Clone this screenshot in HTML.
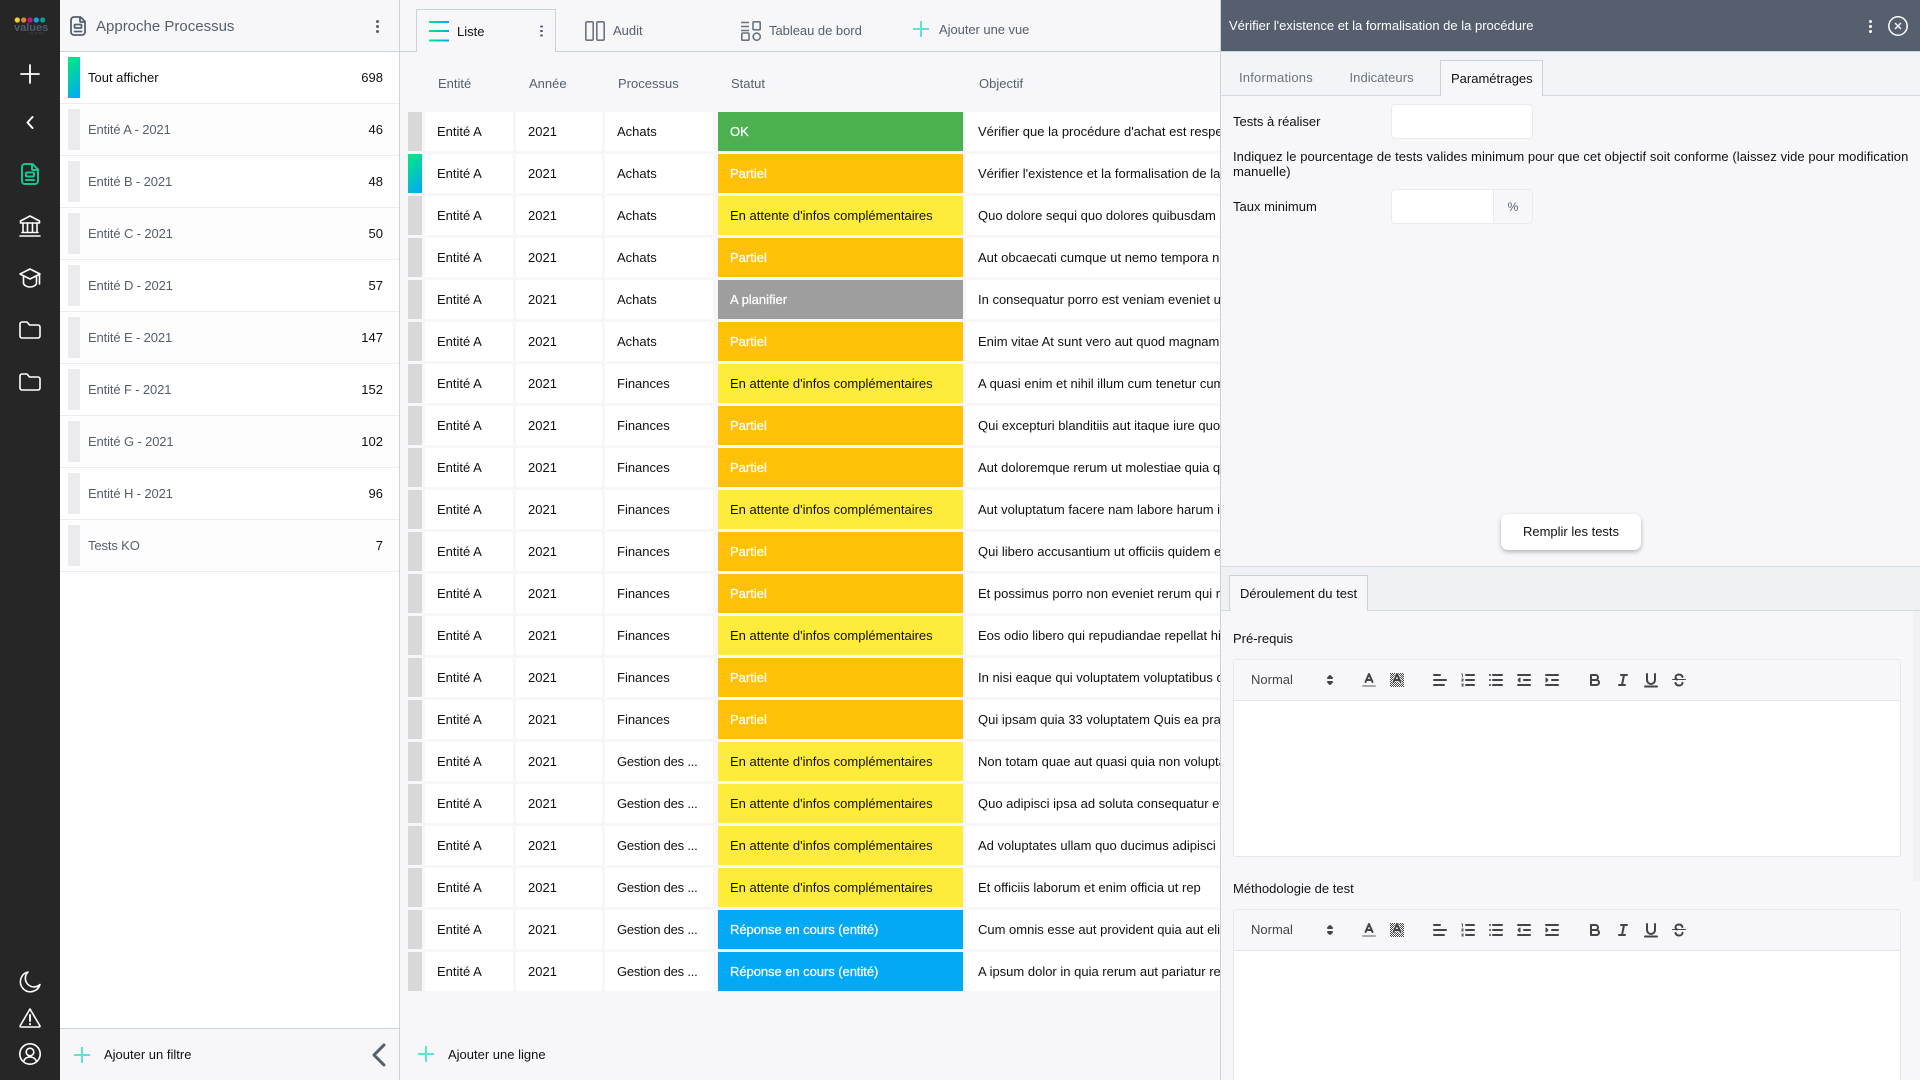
<!DOCTYPE html>
<html lang="fr"><head><meta charset="utf-8"><title>Approche Processus</title>
<style>
*{box-sizing:border-box}
html,body{margin:0;padding:0;width:1920px;height:1080px;overflow:hidden;background:#f7f7fa;font:13px/20px "Liberation Sans",sans-serif;color:#111}
#root{position:absolute;left:0;top:0;width:1920px;height:1080px;overflow:hidden;background:#f7f7fa}
.a,.t{position:absolute}
.t{white-space:nowrap;line-height:20px}
svg{position:absolute;overflow:visible;fill:none}
#side{left:0;top:0;width:60px;height:1080px;background:#262626}
#side svg{stroke:#fff;stroke-width:1.6;stroke-linecap:round;stroke-linejoin:round}
#left{left:60px;top:0;width:340px;height:1080px;background:#fff;border-right:1px solid #c9d3dc}
.f{position:absolute;left:60px;width:339px;height:52px;border-bottom:1px solid #e9ecf0;background:#fff}
.f.o{background:#fdfdfe}
.f i{position:absolute;left:8px;top:5px;width:12px;height:41px;background:#eaeaef}
.f span{position:absolute;left:28px;top:0;line-height:52px;color:#555f6d;letter-spacing:-.13px;white-space:nowrap}
.f b{position:absolute;right:16px;top:0;line-height:52px;font-weight:400;color:#111}
.grad{background:linear-gradient(135deg,#00e882 5%,#03a9f4 95%)!important}
.plus{position:absolute;width:16px;height:16px}
.plus:before,.plus:after{content:"";position:absolute}
.plus:before{left:0;top:7px;width:16px;height:1.6px;background:linear-gradient(90deg,#55f0ab,#5fd8ff)}
.plus:after{left:7px;top:0;width:1.6px;height:16px;background:linear-gradient(180deg,#55f0ab,#5fd8ff)}
.dots{position:absolute;width:3px;height:3px;border-radius:50%;background:#555f6d;box-shadow:0 -5px 0 #555f6d,0 5px 0 #555f6d}
.h{color:#555f6d;top:74px}
.r{position:absolute;left:408px;width:812px;height:39px;line-height:39px;overflow:hidden}
.r>*{position:absolute;top:0;height:39px;white-space:nowrap;overflow:hidden;font-style:normal;font-weight:400;text-decoration:none;background:#fff;color:#111}
.r>i{left:0;width:14px;background:#d8d8d8}
.r>b:nth-child(2){left:17px;width:88px;padding-left:12px}
.r>b:nth-child(3){left:108px;width:86px;padding-left:12px}
.r>b:nth-child(4){left:197px;width:108px;padding-left:12px}
.r>b.g{letter-spacing:-.22px}
.r>u{left:310px;width:245px;padding-left:12px}
.r>b:nth-child(6){left:558px;width:254px;padding-left:12px}
.ok{background:#4caf50!important;color:#fff!important;-webkit-text-stroke:.25px #fff}
.pa{background:#ffc107!important;color:#fff!important;-webkit-text-stroke:.25px #fff}
.at{background:#ffeb3b!important;color:#111!important}
.pl{background:#9e9e9e!important;color:#fff!important;-webkit-text-stroke:.25px #fff}
.re{background:#03a9f4!important;color:#fff!important;-webkit-text-stroke:.25px #fff;letter-spacing:-.05px}
#panel{left:1220px;top:0;width:700px;height:1080px;background:#f7f7fa;border-left:1px solid #c9d3dc}
.box{position:absolute;background:#fff;border:1px solid #eaebef;border-radius:4px}
.ed{position:absolute;left:1233px;width:668px;background:#fff;border:1px solid #e6e7ea;border-radius:3px}
.ed .tb{position:absolute;left:0;top:0;width:666px;height:41px;background:#f7f7fa;border-bottom:1px solid #e2e3e6}
.tb svg{stroke:#444;stroke-width:2;stroke-linecap:round;stroke-linejoin:round}
.tb .n{position:absolute;left:17px;top:10px;color:#444}
</style></head><body><div id="root">

<div class="a" id="left"></div>
<div class="a" id="side">
 <svg style="left:0;top:0" width="60" height="50"><circle cx="17.3" cy="20" r="2.6" fill="#f7d21e" stroke="none"/><circle cx="23.7" cy="20" r="2.6" fill="#dc8a2c" stroke="none"/><circle cx="30" cy="20" r="2.6" fill="#c01487" stroke="none"/><circle cx="36.3" cy="20" r="2.6" fill="#0aa8dc" stroke="none"/><circle cx="42.7" cy="20" r="2.6" fill="#0d9a93" stroke="none"/></svg>
 <div class="t" style="left:14px;top:18px;width:32px;text-align:center;font-weight:700;font-size:11px;color:#4f5b6b">values</div>
 <div class="t" style="left:29px;top:23px;font-size:4px;color:#3d4752">by group</div>
 <svg style="left:21px;top:65px" width="18" height="18"><path d="M9 0v18M0 9h18" stroke-width="1.8"/></svg>
 <svg style="left:26px;top:116px" width="8" height="13"><path d="M6.5 1L1.5 6.5 6.5 12" stroke-width="2"/></svg>
 <svg style="left:21px;top:163px;stroke:#14c792;stroke-width:2" width="18" height="22" viewBox="0 0 18 22"><path d="M4 1h7.500L17 6.500V18a3 3 0 0 1-3 3H4a3 3 0 0 1-3-3V4a3 3 0 0 1 3-3z"/><path d="M11 1.500V6a1 1 0 0 0 1 1h4.500"/><rect x="5" y="9.500" width="8" height="4" rx="1"/><path d="M5 17h8"/></svg>
 <svg style="left:19px;top:215px" width="22" height="22" viewBox="0 0 22 22"><path d="M11 1L20.500 6v2H1.500V6z"/><path d="M4 8v9M8.500 8v9M13.500 8v9M18 8v9M3 17.500h16M1 21h20"/></svg>
 <svg style="left:19px;top:268px" width="22" height="20" viewBox="0 0 22 20"><path d="M11 1L21 6 11 11 1 6z"/><path d="M4.500 8.500V15c0 2 3 4 6.500 4s6.500-2 6.500-4V8.500"/><path d="M20.500 6.500V16"/></svg>
 <svg style="left:19px;top:321px" width="22" height="18" viewBox="0 0 22 18"><path d="M1 3a2 2 0 0 1 2-2h5l2.500 3H19a2 2 0 0 1 2 2v9a2 2 0 0 1-2 2H3a2 2 0 0 1-2-2z"/></svg>
 <svg style="left:19px;top:373px" width="22" height="18" viewBox="0 0 22 18"><path d="M1 3a2 2 0 0 1 2-2h5l2.500 3H19a2 2 0 0 1 2 2v9a2 2 0 0 1-2 2H3a2 2 0 0 1-2-2z"/></svg>
 <svg style="left:19px;top:971px" width="22" height="22" viewBox="0 0 22 22"><path d="M9 1a10 10 0 1 0 12 12.500A8.500 8.500 0 0 1 9 1z"/></svg>
 <svg style="left:19px;top:1008px" width="22" height="20" viewBox="0 0 22 20"><path d="M11 1L21 18a1 1 0 0 1-1 1H2a1 1 0 0 1-1-1z"/><path d="M11 7v6M11 16v.2" stroke-width="2"/></svg>
 <svg style="left:19px;top:1043px" width="22" height="22" viewBox="0 0 22 22"><circle cx="11" cy="11" r="10.200"/><circle cx="11" cy="9" r="3.800"/><path d="M4.500 18.500c1-3 3.500-4.500 6.500-4.500s5.500 1.500 6.500 4.500"/></svg>
</div>

<!-- left panel -->
<div class="a" style="left:60px;top:0;width:339px;height:52px;background:#f7f7fa;border-bottom:1px solid #c9d3dc"></div>
<svg style="left:70px;top:16px;stroke:#555f6d;stroke-width:1.800" width="16" height="20" viewBox="0 0 16 20" stroke-linejoin="round" stroke-linecap="round"><path d="M4 1h6.500L15 5.500V16a3 3 0 0 1-3 3H4a3 3 0 0 1-3-3V4a3 3 0 0 1 3-3z"/><path d="M10 1.500V5a1 1 0 0 0 1 1h3.500"/><rect x="4.500" y="8.500" width="7" height="3.500" rx="1"/><path d="M4.500 15.500h7"/></svg>
<div class="t" style="left:96px;top:16px;line-height:21px;font-size:15px;color:#555f6d">Approche Processus</div>
<div class="dots" style="left:376px;top:24.500px"></div>

<div class="f" style="top:52px"><i class="grad"></i><span style="color:#111;letter-spacing:0">Tout afficher</span><b>698</b></div>
<div class="f o" style="top:104px"><i></i><span>Entité A - 2021</span><b>46</b></div>
<div class="f" style="top:156px"><i></i><span>Entité B - 2021</span><b>48</b></div>
<div class="f o" style="top:208px"><i></i><span>Entité C - 2021</span><b>50</b></div>
<div class="f" style="top:260px"><i></i><span>Entité D - 2021</span><b>57</b></div>
<div class="f o" style="top:312px"><i></i><span>Entité E - 2021</span><b>147</b></div>
<div class="f" style="top:364px"><i></i><span>Entité F - 2021</span><b>152</b></div>
<div class="f o" style="top:416px"><i></i><span>Entité G - 2021</span><b>102</b></div>
<div class="f" style="top:468px"><i></i><span>Entité H - 2021</span><b>96</b></div>
<div class="f o" style="top:520px"><i></i><span>Tests KO</span><b>7</b></div>

<div class="a" style="left:60px;top:1028px;width:339px;height:52px;background:#f7f7fa;border-top:1px solid #c9d3dc"></div>
<div class="plus" style="left:74px;top:1047px"></div>
<div class="t" style="left:104px;top:1045px">Ajouter un filtre</div>
<svg style="left:372px;top:1043px;stroke:#555f6d;stroke-width:3;stroke-linecap:round;stroke-linejoin:round" width="14" height="24"><path d="M12 2L2 12l10 10"/></svg>

<!-- main -->
<div class="a" style="left:400px;top:51px;width:820px;height:1px;background:#c9d3dc"></div>
<div class="a" style="left:416px;top:9px;width:140px;height:43px;background:#f7f7fa;border:1px solid #c9d3dc;border-bottom:0"></div>
<svg style="left:429px;top:20px" width="20" height="22"><defs><linearGradient id="g" gradientUnits="userSpaceOnUse" x1="0" y1="0" x2="20" y2="0"><stop offset="0" stop-color="#00e882"/><stop offset="1" stop-color="#03a9f4"/></linearGradient></defs><path d="M0 2h20M0 11h20M0 20.500h20" stroke="url(#g)" stroke-width="2"/></svg>
<div class="t" style="left:457px;top:21.500px">Liste</div>
<div class="dots" style="left:540px;top:29.500px;width:2.500px;height:2.500px;box-shadow:0 -4.500px 0 #555f6d,0 4.500px 0 #555f6d"></div>
<svg style="left:585px;top:21px;stroke:#6a7480;stroke-width:1.600" width="20" height="20"><rect x=".8" y=".8" width="7.400" height="18.400" rx="1.200"/><rect x="11.800" y=".8" width="7.400" height="18.400" rx="1.200"/></svg>
<div class="t" style="left:613px;top:21px;color:#555f6d">Audit</div>
<svg style="left:741px;top:21px;stroke:#6a7480;stroke-width:1.600" width="20" height="20"><path d="M0 1.500h8M0 5.500h8M0 9.500h8"/><rect x="12" y=".8" width="7.200" height="8" rx="1"/><rect x=".8" y="12" width="7.200" height="7.200" rx="1"/><circle cx="15.700" cy="15.700" r="3.600"/></svg>
<div class="t" style="left:769px;top:21px;color:#555f6d;letter-spacing:-.03px">Tableau de bord</div>
<div class="plus" style="left:913px;top:21px"></div>
<div class="t" style="left:939px;top:20px;color:#555f6d;letter-spacing:-.05px">Ajouter une vue</div>

<div class="t h" style="left:438px">Entité</div>
<div class="t h" style="left:529px">Année</div>
<div class="t h" style="left:618px">Processus</div>
<div class="t h" style="left:731px">Statut</div>
<div class="t h" style="left:979px">Objectif</div>

<div class="r" style="top:112px"><i></i><b>Entité A</b><b>2021</b><b>Achats</b><u class="ok">OK</u><b>Vérifier que la procédure d'achat est respectée</b></div>
<div class="r" style="top:154px"><i class="grad"></i><b>Entité A</b><b>2021</b><b>Achats</b><u class="pa">Partiel</u><b>Vérifier l'existence et la formalisation de la procédure</b></div>
<div class="r" style="top:196px"><i></i><b>Entité A</b><b>2021</b><b>Achats</b><u class="at">En attente d'infos complémentaires</u><b>Quo dolore sequi quo dolores quibusdam qui</b></div>
<div class="r" style="top:238px"><i></i><b>Entité A</b><b>2021</b><b>Achats</b><u class="pa">Partiel</u><b>Aut obcaecati cumque ut nemo tempora nemo</b></div>
<div class="r" style="top:280px"><i></i><b>Entité A</b><b>2021</b><b>Achats</b><u class="pl">A planifier</u><b>In consequatur porro est veniam eveniet ut quia</b></div>
<div class="r" style="top:322px"><i></i><b>Entité A</b><b>2021</b><b>Achats</b><u class="pa">Partiel</u><b>Enim vitae At sunt vero aut quod magnam aut</b></div>
<div class="r" style="top:364px"><i></i><b>Entité A</b><b>2021</b><b>Finances</b><u class="at">En attente d'infos complémentaires</u><b>A quasi enim et nihil illum cum tenetur cum quia</b></div>
<div class="r" style="top:406px"><i></i><b>Entité A</b><b>2021</b><b>Finances</b><u class="pa">Partiel</u><b>Qui excepturi blanditiis aut itaque iure quo aut</b></div>
<div class="r" style="top:448px"><i></i><b>Entité A</b><b>2021</b><b>Finances</b><u class="pa">Partiel</u><b>Aut doloremque rerum ut molestiae quia qui aut</b></div>
<div class="r" style="top:490px"><i></i><b>Entité A</b><b>2021</b><b>Finances</b><u class="at">En attente d'infos complémentaires</u><b>Aut voluptatum facere nam labore harum id quia</b></div>
<div class="r" style="top:532px"><i></i><b>Entité A</b><b>2021</b><b>Finances</b><u class="pa">Partiel</u><b>Qui libero accusantium ut officiis quidem et aut</b></div>
<div class="r" style="top:574px"><i></i><b>Entité A</b><b>2021</b><b>Finances</b><u class="pa">Partiel</u><b>Et possimus porro non eveniet rerum qui rem aut</b></div>
<div class="r" style="top:616px"><i></i><b>Entité A</b><b>2021</b><b>Finances</b><u class="at">En attente d'infos complémentaires</u><b>Eos odio libero qui repudiandae repellat hic aut</b></div>
<div class="r" style="top:658px"><i></i><b>Entité A</b><b>2021</b><b>Finances</b><u class="pa">Partiel</u><b>In nisi eaque qui voluptatem voluptatibus qui aut</b></div>
<div class="r" style="top:700px"><i></i><b>Entité A</b><b>2021</b><b>Finances</b><u class="pa">Partiel</u><b>Qui ipsam quia 33 voluptatem Quis ea praesentium</b></div>
<div class="r" style="top:742px"><i></i><b>Entité A</b><b>2021</b><b class="g">Gestion des ...</b><u class="at">En attente d'infos complémentaires</u><b>Non totam quae aut quasi quia non voluptas aut</b></div>
<div class="r" style="top:784px"><i></i><b>Entité A</b><b>2021</b><b class="g">Gestion des ...</b><u class="at">En attente d'infos complémentaires</u><b>Quo adipisci ipsa ad soluta consequatur et aut</b></div>
<div class="r" style="top:826px"><i></i><b>Entité A</b><b>2021</b><b class="g">Gestion des ...</b><u class="at">En attente d'infos complémentaires</u><b>Ad voluptates ullam quo ducimus adipisci aut quia</b></div>
<div class="r" style="top:868px"><i></i><b>Entité A</b><b>2021</b><b class="g">Gestion des ...</b><u class="at">En attente d'infos complémentaires</u><b>Et officiis laborum et enim officia ut rep</b></div>
<div class="r" style="top:910px"><i></i><b>Entité A</b><b>2021</b><b class="g">Gestion des ...</b><u class="re">Réponse en cours (entité)</u><b>Cum omnis esse aut provident quia aut eligendi</b></div>
<div class="r" style="top:952px"><i></i><b>Entité A</b><b>2021</b><b class="g">Gestion des ...</b><u class="re">Réponse en cours (entité)</u><b>A ipsum dolor in quia rerum aut pariatur rem aut</b></div>

<div class="plus" style="left:418px;top:1046px"></div>
<div class="t" style="left:448px;top:1045px">Ajouter une ligne</div>

<!-- right panel -->
<div class="a" id="panel"></div>
<div class="a" style="left:1221px;top:0;width:699px;height:51px;background:#555f6d"></div>
<div class="a" style="left:1221px;top:51px;width:699px;height:45px;background:#f3f4f7;border-top:1px solid #c9d3dc;border-bottom:1px solid #d3dae1"></div>
<div class="t" style="left:1229px;top:16px;color:#fff">Vérifier l'existence et la formalisation de la procédure</div>
<div class="dots" style="left:1869px;top:24.500px;background:#fff;box-shadow:0 -5px 0 #fff,0 5px 0 #fff"></div>
<svg style="left:1888px;top:16px;stroke:#fff;stroke-width:1.500;stroke-linecap:round" width="20" height="20"><circle cx="10" cy="10" r="9.200"/><path d="M7.500 7.500l5 5M12.500 7.500l-5 5"/></svg>

<div class="t" style="left:1239px;top:68px;color:#6b7580;letter-spacing:.2px">Informations</div>
<div class="t" style="left:1349.500px;top:68px;color:#6b7580;letter-spacing:.05px">Indicateurs</div>
<div class="a" style="left:1440px;top:60px;width:103px;height:36px;background:#f7f7fa;border:1px solid #c9d3dc;border-bottom:0"></div>
<div class="t" style="left:1451px;top:69px">Paramétrages</div>

<div class="t" style="left:1233px;top:112px">Tests à réaliser</div>
<div class="box" style="left:1391px;top:104px;width:142px;height:35px"></div>
<div class="t" style="left:1233px;top:149px;line-height:15px;white-space:nowrap;letter-spacing:.06px">Indiquez le pourcentage de tests valides minimum pour que cet objectif soit conforme (laissez vide pour modification<br>manuelle)</div>
<div class="t" style="left:1233px;top:197px">Taux minimum</div>
<div class="box" style="left:1391px;top:189px;width:142px;height:35px"></div>
<div class="a" style="left:1493px;top:190px;width:39px;height:33px;background:#f7f7fa;border-left:1px solid #eaebef;border-radius:0 3px 3px 0;text-align:center;line-height:34px;color:#555f6d;font-size:12px">%</div>

<div class="a" style="left:1501px;top:514px;width:140px;height:36px;background:#fff;border-radius:7px;box-shadow:0 2px 5px rgba(0,0,0,.28);text-align:center;line-height:36px">Remplir les tests</div>

<div class="a" style="left:1221px;top:566px;width:699px;height:45px;background:#f0f1f5;border-top:1px solid #d3dae1;border-bottom:1px solid #d3dae1"></div>
<div class="a" style="left:1229px;top:575px;width:139px;height:36px;background:#f7f7fa;border:1px solid #c9d3dc;border-bottom:0"></div>
<div class="t" style="left:1240px;top:584px">Déroulement du test</div>
<div class="a" style="left:1913px;top:611px;width:7px;height:270px;background:#f0f1f5"></div>

<div class="t" style="left:1233px;top:629px">Pré-requis</div>
<div class="ed" style="top:659px;height:198px"><div class="tb"><span class="n">Normal</span>
<svg style="left:126px;top:11px" width="540" height="18" viewBox="0 0 540 18"><defs><pattern id="p1" width="2" height="2" patternUnits="userSpaceOnUse"><rect width="1" height="1" fill="#444" stroke="none"/><rect x="1" y="1" width="1" height="1" fill="#444" stroke="none"/></pattern></defs>
<g transform="translate(-39 0)" fill="#444" stroke-width="2"><path d="M7 7L9 5 11 7zM7 11L9 13 11 11z"/></g>
<g transform="translate(0 0)"><path d="M3 15h12" stroke="#aaa"/><path d="M5.500 11L9 3l3.500 8M11 9H6.500"/></g>
<g transform="translate(28 0)"><rect x="2" y="2" width="14" height="14" fill="url(#p1)" stroke="none"/><path d="M5.500 11L9 3l3.500 8M11 9H6.500" stroke="#fff" stroke-width="3"/><path d="M5.500 11L9 3l3.500 8M11 9H6.500"/></g>
<g transform="translate(71 0)"><path d="M3 9h12M3 14h10M3 4h6"/></g>
<g transform="translate(99 0)"><path d="M7 4h8M7 9h8M7 14h8"/><path d="M2.500 3h1v3M2.500 8h2l-2 2h2M2.500 13h2l-1 1 1 1h-2" stroke-width=".8"/></g>
<g transform="translate(127 0)"><path d="M6 4h9M6 9h9M6 14h9M3 4h0M3 9h0M3 14h0"/></g>
<g transform="translate(155 0)"><path d="M3 14h12M3 4h12M9 9h6"/><path d="M5 7v4L3 9z" fill="#444" stroke-width="1"/></g>
<g transform="translate(183 0)"><path d="M3 14h12M3 4h12M9 9h6"/><path d="M3 7v4l2-2z" fill="#444" stroke-width="1"/></g>
<g transform="translate(226 0)"><path d="M5 4h4.500a2.500 2.500 0 0 1 0 5H5zM5 9h5.500a2.500 2.500 0 0 1 0 5H5z"/></g>
<g transform="translate(254 0)"><path d="M7 4h6M5 14h6M8 14l2-10"/></g>
<g transform="translate(282 0)"><path d="M5 3v6a4 4 0 0 0 8 0V3M3 15.500h12"/></g>
<g transform="translate(310 0)"><path d="M15.500 8.500h-13" stroke-width="1"/><path d="M12.500 6C12 4.500 10.500 3.500 9 3.500 7 3.500 5.500 4.700 5.500 6.300 5.500 7.300 6 8 7 8.500M12.500 11.700C12.500 13.300 11 14.500 9 14.500 7.500 14.500 6 13.500 5.500 12"/></g>
</svg></div></div>

<div class="t" style="left:1233px;top:879px">Méthodologie de test</div>
<div class="ed" style="top:909px;height:190px"><div class="tb"><span class="n">Normal</span>
<svg style="left:126px;top:11px" width="540" height="18" viewBox="0 0 540 18">
<g transform="translate(-39 0)" fill="#444" stroke-width="2"><path d="M7 7L9 5 11 7zM7 11L9 13 11 11z"/></g>
<g><path d="M3 15h12" stroke="#aaa"/><path d="M5.500 11L9 3l3.500 8M11 9H6.500"/></g>
<g transform="translate(28 0)"><rect x="2" y="2" width="14" height="14" fill="url(#p1)" stroke="none"/><path d="M5.500 11L9 3l3.500 8M11 9H6.500" stroke="#fff" stroke-width="3"/><path d="M5.500 11L9 3l3.500 8M11 9H6.500"/></g>
<g transform="translate(71 0)"><path d="M3 9h12M3 14h10M3 4h6"/></g>
<g transform="translate(99 0)"><path d="M7 4h8M7 9h8M7 14h8"/><path d="M2.500 3h1v3M2.500 8h2l-2 2h2M2.500 13h2l-1 1 1 1h-2" stroke-width=".8"/></g>
<g transform="translate(127 0)"><path d="M6 4h9M6 9h9M6 14h9M3 4h0M3 9h0M3 14h0"/></g>
<g transform="translate(155 0)"><path d="M3 14h12M3 4h12M9 9h6"/><path d="M5 7v4L3 9z" fill="#444" stroke-width="1"/></g>
<g transform="translate(183 0)"><path d="M3 14h12M3 4h12M9 9h6"/><path d="M3 7v4l2-2z" fill="#444" stroke-width="1"/></g>
<g transform="translate(226 0)"><path d="M5 4h4.500a2.500 2.500 0 0 1 0 5H5zM5 9h5.500a2.500 2.500 0 0 1 0 5H5z"/></g>
<g transform="translate(254 0)"><path d="M7 4h6M5 14h6M8 14l2-10"/></g>
<g transform="translate(282 0)"><path d="M5 3v6a4 4 0 0 0 8 0V3M3 15.500h12"/></g>
<g transform="translate(310 0)"><path d="M15.500 8.500h-13" stroke-width="1"/><path d="M12.500 6C12 4.500 10.500 3.500 9 3.500 7 3.500 5.500 4.700 5.500 6.300 5.500 7.300 6 8 7 8.500M12.500 11.700C12.500 13.300 11 14.500 9 14.500 7.500 14.500 6 13.500 5.500 12"/></g>
</svg></div></div>
</div></body></html>
